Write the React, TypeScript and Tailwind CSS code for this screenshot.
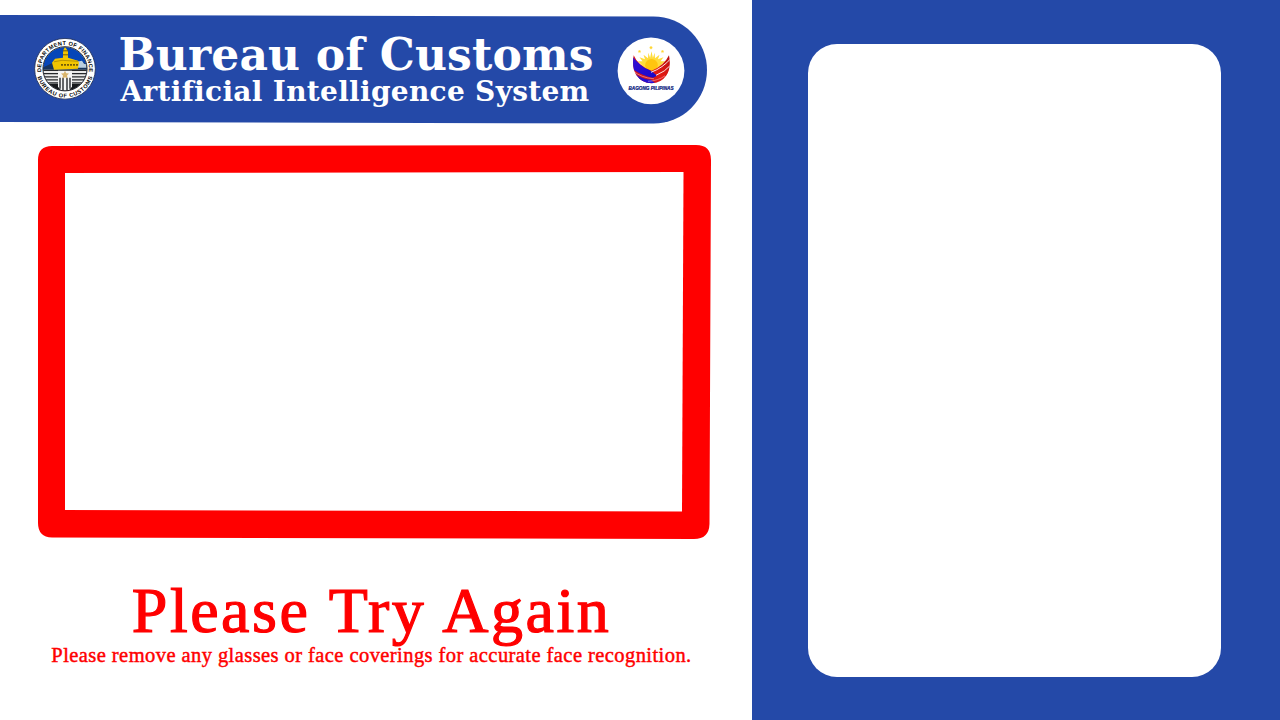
function CustomsSeal() {
  return (
    <svg viewBox="0 0 62 62" className="size-[62px] shrink-0" aria-label="Bureau of Customs seal">
      <defs>
        <path id="seal-top" d="M7.6 36A23.9 23.9 0 1 1 54.4 36" />
        <path id="seal-bottom" d="M3 37A28.6 28.6 0 0 0 59 37" />
        <clipPath id="seal-core"><circle cx="31" cy="31" r="21.8" /></clipPath>
      </defs>
      <circle cx="31" cy="31" r="30.4" fill="#fff" stroke="#25345f" strokeWidth="0.9" />
      <g clipPath="url(#seal-core)">
        <rect width="62" height="62" fill="#0646b8" />
        <path d="M6 31L19 25L30 27L47 23L56 29V33H6Z" fill="#17345e" />
        <path d="M42 24l6-1 2 3 5 1v3H42z" fill="#b9cee0" />
        <path d="M7 32H55V62H7Z" fill="#e9e9e9" />
        <path d="M7 32.5H55M7 35.8H55M7 39H55M7 42H55M7 45H55" stroke="#26282b" strokeWidth="1.3" />
        <path d="M12 46h38L31 59Z" fill="#17191c" />
        <path d="M18 25l3-4 8-1v-5l.5-3 1.5-3 2 3 1 2v6l10 3 1 2-1 6-24 1z" fill="#f2c500" />
        <path d="M29 13h5M29 17h5" stroke="#735b08" strokeWidth="1" />
        <path d="M20 24l8-1.5 16 1" fill="none" stroke="#a98805" strokeWidth="0.8" />
        <path d="M27 27h17" stroke="#735b08" strokeWidth="1.8" strokeDasharray="2 1" />
        <path d="M24 33h14v16l-7 8-7-8z" fill="#f5f5f5" />
        <path d="M26 40v11M29 40v14M33 40v14M36 40v11" stroke="#26282b" strokeWidth="1.4" />
        <path d="M31 33l1.2 2.5 2.8.3-2 2 .5 3-2.5-1.4-2.5 1.4.5-3-2-2 2.8-.3z" fill="#d9b46c" />
      </g>
      <circle cx="31" cy="31" r="22.1" fill="none" stroke="#17191c" strokeWidth="0.9" />
      <g fill="#050505" className="font-[Liberation_Sans] text-[5.6px] font-bold">
        <text textAnchor="middle"><textPath href="#seal-top" startOffset="50%" textLength="81" lengthAdjust="spacing">DEPARTMENT OF FINANCE</textPath></text>
        <text textAnchor="middle"><textPath href="#seal-bottom" startOffset="50%" textLength="73" lengthAdjust="spacing">BUREAU OF CUSTOMS</textPath></text>
      </g>
    </svg>
  );
}

function BagongPilipinasLogo() {
  return (
    <svg viewBox="0 0 68 68" className="size-[68px] shrink-0" aria-label="Bagong Pilipinas">
      <defs>
        <linearGradient id="blue-band" x2="1" y2="1"><stop stopColor="#3a12d8" /><stop offset="1" stopColor="#1908c8" /></linearGradient>
        <linearGradient id="red-band" x1="1" x2="0" y2="1"><stop stopColor="#a80c10" /><stop offset=".5" stopColor="#e51b14" /><stop offset="1" stopColor="#ad0b2d" /></linearGradient>
        <clipPath id="logo-bowl"><path d="M16.7 18.5Q21 29 34.5 34Q47 29 52 18.5Q54.5 31 49.5 38.5Q44 46.5 34.5 46.5Q25 46.5 19.5 38.5Q14.5 31 16.7 18.5Z" /></clipPath>
      </defs>
      <circle cx="34" cy="34" r="33.4" fill="#fff" />
      <path d="M34.5 14.5l1.4 6.5 1.8-5 .3 5.5 4.5-3.5-1.5 4.5 5.5-2-3 4 4.5 0-6 6-7.5 4.5-7.5-4.5-6-6 4.5 0-3-4 5.5 2-1.5-4.5 4.5 3.5.3-5.5 1.8 5z" fill="#ffdc3c" />
      <circle cx="34.5" cy="28.5" r="6.3" fill="#ffc50f" />
      <path d="M34 9.3l.5 1 .9.1-.7.8.2 1-.9-.5-.9.5.2-1-.7-.8.9-.1zM22.5 13.3l.4.8.9.1-.7.7.2.9-.8-.5-.8.5.2-.9-.7-.7.9-.1zM45.5 13.3l.4.8.9.1-.7.7.2.9-.8-.5-.8.5.2-.9-.7-.7.9-.1z" fill="#ffd42b" stroke="#ffd42b" strokeWidth=".4" />
      <g clipPath="url(#logo-bowl)">
        <path d="M12 14H57V50H12Z" fill="url(#red-band)" />
        <path d="M12 14Q20 28 32 33Q36 35 40 39L36 41Q25 39 12 30Z" fill="url(#blue-band)" />
        <path d="M15 35Q25 43 34 43L40 48H20Z" fill="#2510d0" />
        <path d="M34 35.5Q46 31 54 21.5M39 38.5Q48 35 54 28" fill="none" stroke="#fff" strokeWidth=".9" />
        <path d="M16 34Q24 41 37 42M31 44.5Q41 44 48 39" fill="none" stroke="#f4cddd" strokeWidth=".5" />
      </g>
      <text x="34" y="53" textAnchor="middle" textLength="45" lengthAdjust="spacingAndGlyphs" fill="#08187b" stroke="#08187b" strokeWidth=".2" className="font-[Liberation_Sans] text-[4.5px] font-bold italic">BAGONG PILIPINAS</text>
    </svg>
  );
}

export default function App() {
  return (
    <main className="flex h-[720px] w-[1280px] overflow-hidden bg-white">
      <section className="flex w-[752px] shrink-0 flex-col pt-[14.5px]">
        <header className="flex h-[107px] w-[707px] origin-left skew-y-[0.13deg] rounded-r-[54px] bg-[#2449a8]">
          <div className="flex w-full -skew-y-[0.13deg]">
            <div className="ml-[33.5px] mt-[21.5px]"><CustomsSeal /></div>
            <div className="ml-[23px] mt-[15px] w-[486px] whitespace-nowrap font-['DejaVu_Serif',serif] font-bold text-white">
              <h1 className="h-[45.5px] text-[44px] leading-[48px] tracking-[0.15px]">Bureau of Customs</h1>
              <p className="pl-[2px] text-[28px] leading-[30px] tracking-[0.3px] [font-variant-ligatures:none]">Artificial Intelligence System</p>
            </div>
            <div className="ml-[12.5px] mt-[21px]"><BagongPilipinasLogo /></div>
          </div>
        </header>
        <div className="ml-[38px] mt-[23.5px] h-[394px] w-[673px] bg-[#ff0000] [clip-path:path('M14_1L658_0Q673_0_673_15L671.5_379Q671_394_656_394L14_392.5Q0_392_0_378V15Q0_1_14_1Z')]">
          <div className="ml-[27px] h-full w-[619px] bg-white [clip-path:polygon(0_28px,618.5px_27px,617px_366.5px,0_365px)]" />
        </div>
        <div className="mt-[42px] w-[743px] whitespace-nowrap text-center font-['Liberation_Serif',serif] text-[#ff0000]">
          <h2 className="h-[63px] text-[64px] leading-[59px] tracking-[2.5px] [word-spacing:1px] [-webkit-text-stroke:1.2px_#ff0000]">Please Try Again</h2>
          <p className="text-[20.5px] leading-[22px] tracking-[0.43px] [-webkit-text-stroke:0.45px_#ff0000]">Please remove any glasses or face coverings for accurate face recognition.</p>
        </div>
      </section>
      <aside className="flex-1 bg-[#2449a8] pl-[56px] pt-[44px]">
        <div className="h-[633px] w-[413px] rounded-[29px] bg-white" />
      </aside>
    </main>
  );
}
